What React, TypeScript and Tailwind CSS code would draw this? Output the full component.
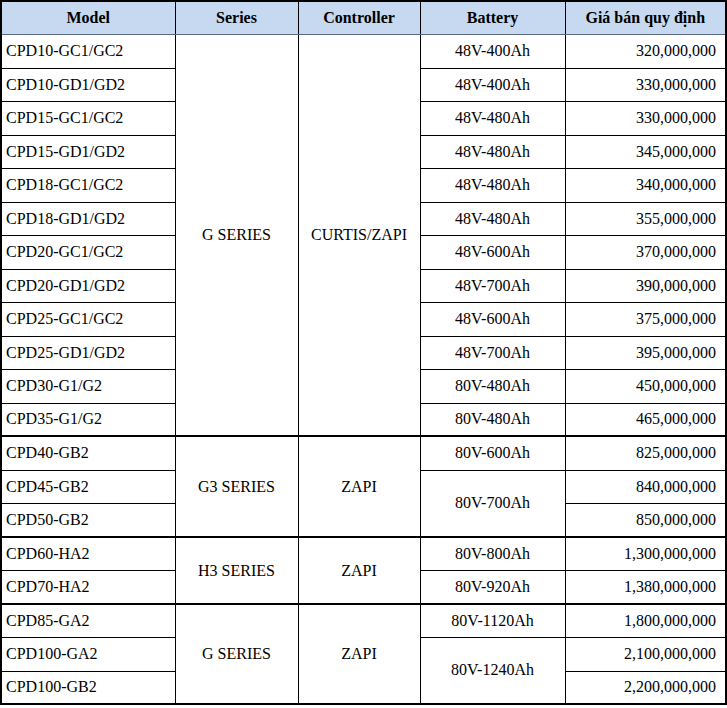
import React from "react";

type Row = {
  model: string;
  series?: { text: string; span: number };
  ctrl?: { text: string; span: number };
  battery?: { text: string; span: number };
  price: string;
  groupStart?: boolean;
};

const rows: Row[] = [
  { model: "CPD10-GC1/GC2", series: { text: "G SERIES", span: 12 }, ctrl: { text: "CURTIS/ZAPI", span: 12 }, battery: { text: "48V-400Ah", span: 1 }, price: "320,000,000" },
  { model: "CPD10-GD1/GD2", battery: { text: "48V-400Ah", span: 1 }, price: "330,000,000" },
  { model: "CPD15-GC1/GC2", battery: { text: "48V-480Ah", span: 1 }, price: "330,000,000" },
  { model: "CPD15-GD1/GD2", battery: { text: "48V-480Ah", span: 1 }, price: "345,000,000" },
  { model: "CPD18-GC1/GC2", battery: { text: "48V-480Ah", span: 1 }, price: "340,000,000" },
  { model: "CPD18-GD1/GD2", battery: { text: "48V-480Ah", span: 1 }, price: "355,000,000" },
  { model: "CPD20-GC1/GC2", battery: { text: "48V-600Ah", span: 1 }, price: "370,000,000" },
  { model: "CPD20-GD1/GD2", battery: { text: "48V-700Ah", span: 1 }, price: "390,000,000" },
  { model: "CPD25-GC1/GC2", battery: { text: "48V-600Ah", span: 1 }, price: "375,000,000" },
  { model: "CPD25-GD1/GD2", battery: { text: "48V-700Ah", span: 1 }, price: "395,000,000" },
  { model: "CPD30-G1/G2", battery: { text: "80V-480Ah", span: 1 }, price: "450,000,000" },
  { model: "CPD35-G1/G2", battery: { text: "80V-480Ah", span: 1 }, price: "465,000,000" },
  { model: "CPD40-GB2", series: { text: "G3 SERIES", span: 3 }, ctrl: { text: "ZAPI", span: 3 }, battery: { text: "80V-600Ah", span: 1 }, price: "825,000,000", groupStart: true },
  { model: "CPD45-GB2", battery: { text: "80V-700Ah", span: 2 }, price: "840,000,000" },
  { model: "CPD50-GB2", price: "850,000,000" },
  { model: "CPD60-HA2", series: { text: "H3 SERIES", span: 2 }, ctrl: { text: "ZAPI", span: 2 }, battery: { text: "80V-800Ah", span: 1 }, price: "1,300,000,000", groupStart: true },
  { model: "CPD70-HA2", battery: { text: "80V-920Ah", span: 1 }, price: "1,380,000,000" },
  { model: "CPD85-GA2", series: { text: "G SERIES", span: 3 }, ctrl: { text: "ZAPI", span: 3 }, battery: { text: "80V-1120Ah", span: 1 }, price: "1,800,000,000", groupStart: true },
  { model: "CPD100-GA2", battery: { text: "80V-1240Ah", span: 2 }, price: "2,100,000,000" },
  { model: "CPD100-GB2", price: "2,200,000,000" },
];

export default function App() {
  const cell = "border border-black p-0 align-middle";
  return (
    <div className="w-[727px] h-[708px] bg-white" style={{ fontFamily: '"Liberation Serif", "Times New Roman", serif' }}>
      <table className="table-fixed border-collapse w-[725px] text-[16px] text-black border-2 border-black">
        <colgroup>
          <col className="w-[174px]" />
          <col className="w-[123px]" />
          <col className="w-[122px]" />
          <col className="w-[145px]" />
          <col className="w-[161px]" />
        </colgroup>
        <thead>
          <tr className="h-[33px] bg-[#c6d9f1] font-bold">
            <th className="border border-black border-b-[#5a6a80] text-center">Model</th>
            <th className="border border-black border-b-[#5a6a80] text-center">Series</th>
            <th className="border border-black border-b-[#5a6a80] text-center">Controller</th>
            <th className="border border-black border-b-[#5a6a80] text-center">Battery</th>
            <th className="border border-black border-b-[#5a6a80] text-center">Giá bán quy định</th>
          </tr>
        </thead>
        <tbody>
          {rows.map((r, i) => (
            <tr key={i} className={i % 2 === 0 ? "h-[34px]" : "h-[33px]"}>
              <td className={`${cell} pl-[4px] text-left ${r.groupStart ? "border-t-2" : ""}`}>{r.model}</td>
              {r.series && (
                <td rowSpan={r.series.span} className={`${cell} text-center ${r.groupStart ? "border-t-2" : ""}`}>{r.series.text}</td>
              )}
              {r.ctrl && (
                <td rowSpan={r.ctrl.span} className={`${cell} text-center ${r.groupStart ? "border-t-2" : ""}`}>{r.ctrl.text}</td>
              )}
              {r.battery && (
                <td rowSpan={r.battery.span} className={`${cell} text-center ${r.groupStart ? "border-t-2" : ""}`}>{r.battery.text}</td>
              )}
              <td className={`${cell} pr-[9px] text-right ${r.groupStart ? "border-t-2" : ""}`}>{r.price}</td>
            </tr>
          ))}
        </tbody>
      </table>
    </div>
  );
}
